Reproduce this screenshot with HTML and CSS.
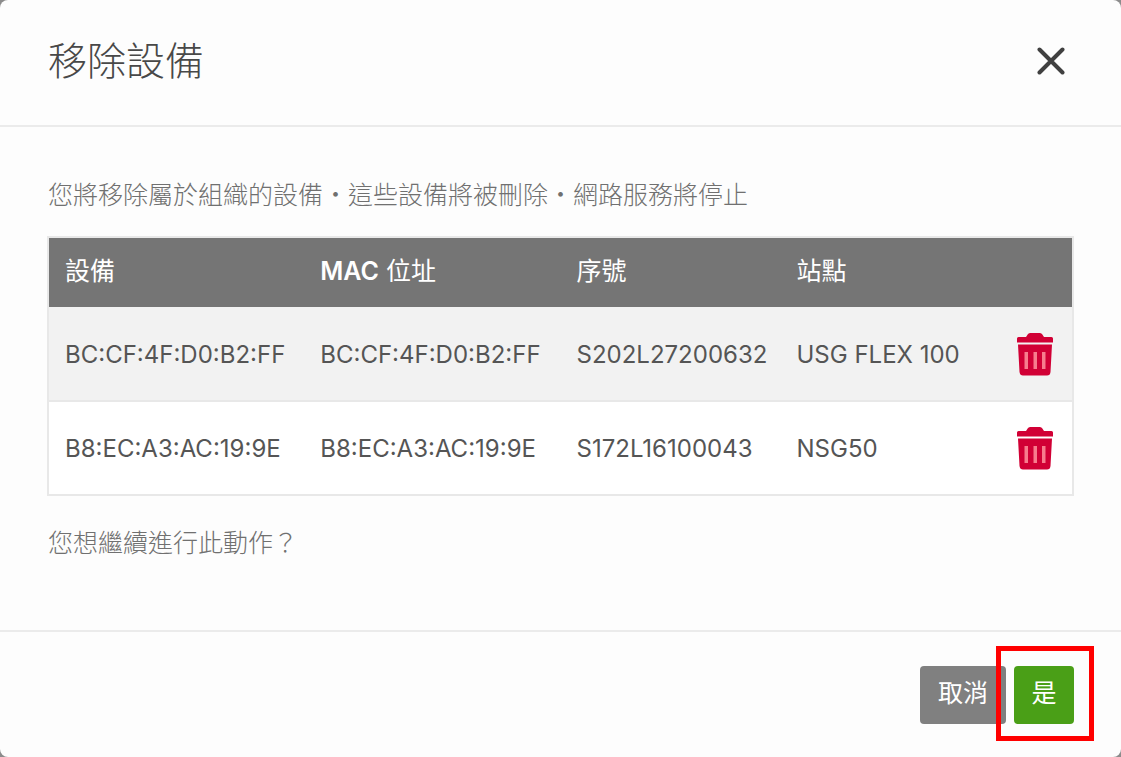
FILE: index.html
```html
<!DOCTYPE html>
<html lang="zh-Hant">
<head>
    <meta charset="UTF-8">
    <meta name="viewport" content="width=device-width, initial-scale=1">
    <title>移除設備</title>
    <link rel="stylesheet" href="styles.css">
</head>
<body>
    <div class="modal" role="dialog" aria-labelledby="modalTitle">
        <header class="modal-header">
            <h1 id="modalTitle">移除設備</h1>
            <button type="button" class="close-btn" aria-label="關閉">
                <svg width="28" height="28" viewBox="0 0 28 28"><path d="M2.5 2.5L25.5 25.5M25.5 2.5L2.5 25.5" fill="none" stroke="#404040" stroke-width="4" stroke-linecap="round"/></svg>
            </button>
        </header>

        <div class="modal-body">
            <p>您將移除屬於組織的設備・這些設備將被刪除・網路服務將停止</p>
            <table class="device-table">
                <colgroup>
                    <col class="col-device">
                    <col class="col-mac">
                    <col class="col-serial">
                    <col class="col-site">
                    <col class="col-action">
                </colgroup>
                <thead>
                    <tr>
                        <th>設備</th>
                        <th><b>MAC</b> 位址</th>
                        <th>序號</th>
                        <th>站點</th>
                        <th></th>
                    </tr>
                </thead>
                <tbody>
                    <tr>
                        <td>BC:CF:4F:D0:B2:FF</td>
                        <td>BC:CF:4F:D0:B2:FF</td>
                        <td>S202L27200632</td>
                        <td>USG FLEX 100</td>
                        <td class="action">
                            <button type="button" class="delete-btn" aria-label="刪除">
                                <svg width="36" height="44" viewBox="0 0 36 44">
                                    <path fill="#d10035" d="M9 5L11 2Q12 1 13.500 1H22.500Q24 1 25 2L27 5H34.500Q36 5 36 6.500V10.500H0V6.500Q0 5 1.500 5ZM1 12.500H35L33.500 40Q33.200 43.500 30 43.500H6Q3 43.500 2.500 40Z"/>
                                    <path fill="#f77d8d" d="M7.500 20H11V37H7.500ZM16.500 20H20V37H16.500ZM25 20H28.500V37H25Z"/>
                                </svg>
                            </button>
                        </td>
                    </tr>
                    <tr>
                        <td>B8:EC:A3:AC:19:9E</td>
                        <td>B8:EC:A3:AC:19:9E</td>
                        <td>S172L16100043</td>
                        <td>NSG50</td>
                        <td class="action">
                            <button type="button" class="delete-btn" aria-label="刪除">
                                <svg width="36" height="44" viewBox="0 0 36 44">
                                    <path fill="#d10035" d="M9 5L11 2Q12 1 13.500 1H22.500Q24 1 25 2L27 5H34.500Q36 5 36 6.500V10.500H0V6.500Q0 5 1.500 5ZM1 12.500H35L33.500 40Q33.200 43.500 30 43.500H6Q3 43.500 2.500 40Z"/>
                                    <path fill="#f77d8d" d="M7.500 20H11V37H7.500ZM16.500 20H20V37H16.500ZM25 20H28.500V37H25Z"/>
                                </svg>
                            </button>
                        </td>
                    </tr>
                </tbody>
            </table>
            <p>您想繼續進行此動作？</p>
        </div>

        <footer class="modal-footer">
            <button type="button" class="btn cancel-btn">取消</button>
            <div class="highlight">
                <button type="button" class="btn yes-btn">是</button>
            </div>
        </footer>
    </div>
</body>
</html>
```

FILE: styles.css
```css
* { box-sizing: border-box; }
body { margin: 0; background: #8c8c8c; color: #555; font-family: Inter, "Noto Sans CJK TC", sans-serif; font-size: 25px; line-height: 36px; }
button { font-family: inherit; border: none; cursor: pointer; }
svg { display: block; }

.modal { display: flex; flex-direction: column; min-height: 100vh; background: #fdfdfd; border-radius: 8px; }

.modal-header { display: flex; align-items: center; justify-content: space-between; padding: 32px 56px 36px 48px; border-bottom: 2px solid #ebebeb; }
.modal-header h1 { margin: 0; font-size: 39px; line-height: 57px; font-weight: 300; color: #484848; }
.close-btn { padding: 0; background: none; }

.modal-body { flex: 1; padding: 50px 47px 0; }
.modal-body p { margin: 0; padding-left: 1px; font-weight: 300; color: #707070; }

.device-table { width: 100%; margin: 23px 0 29px; table-layout: fixed; border-collapse: collapse; border: 2px solid #e8e8e8; background: #fff; }
.device-table th { height: 70px; padding: 0 0 4px 16px; background: #757575; color: #fff; font-size: 25px; font-weight: 400; text-align: left; }
.device-table th b { font-weight: 600; }
.device-table td { height: 94px; padding: 2px 0 0 16px; border-top: 2px solid #e8e8e8; font-size: 24px; font-weight: 400; white-space: nowrap; }
.device-table tbody tr:first-child { background: #f2f2f2; }
.device-table tbody tr:first-child td { border-top: none; }
.device-table .action { padding: 0 19px 0 0; }
.col-device, .col-mac { width: 25%; }
.col-serial { width: 220px; }
.col-site { width: 20%; }
.delete-btn { display: block; margin-left: auto; padding: 0; background: none; }

.modal-footer { display: flex; align-items: center; justify-content: flex-end; gap: 8px; padding: 34px 47px 33px; border-top: 2px solid #ebebeb; }
.btn { height: 58px; padding: 0 0 4px; border-radius: 4px; color: #fff; font-size: 25px; line-height: 36px; }
.cancel-btn { width: 86px; background: #808080; }
.yes-btn { width: 60px; background: #4a9f17; }

/* red frame around the confirm button */
.highlight { position: relative; }
.highlight::after { content: ""; position: absolute; top: -20px; right: -20px; bottom: -17px; left: -18px; border: 5px solid #f00; pointer-events: none; }
```
